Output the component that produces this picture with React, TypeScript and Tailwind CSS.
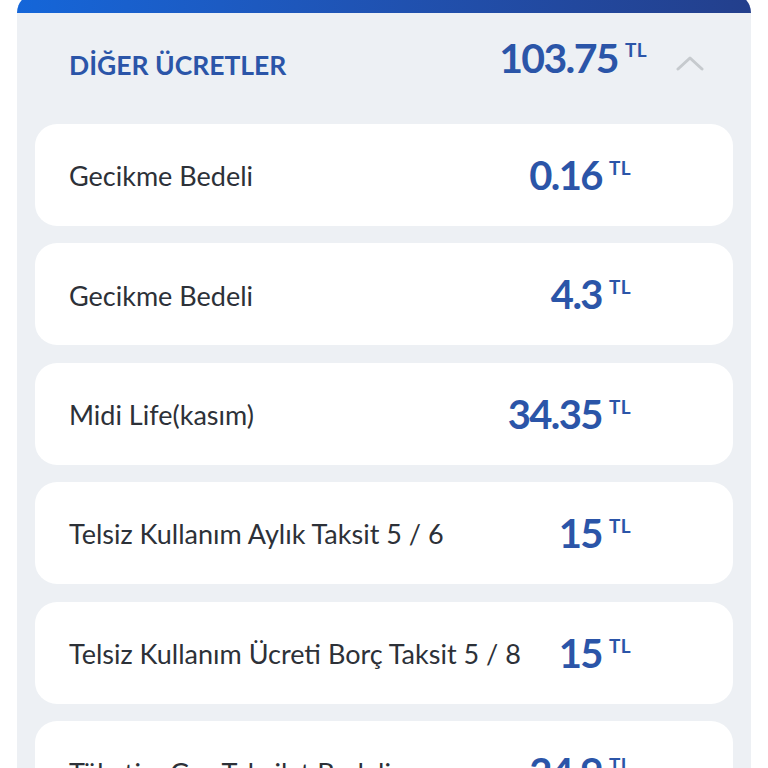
import React from 'react';

interface Fee {
  label: string;
  amount: string;
}

const fees: Fee[] = [
  { label: 'Gecikme Bedeli', amount: '0.16' },
  { label: 'Gecikme Bedeli', amount: '4.3' },
  { label: 'Midi Life(kasım)', amount: '34.35' },
  { label: 'Telsiz Kullanım Aylık Taksit 5 / 6', amount: '15' },
  { label: 'Telsiz Kullanım Ücreti Borç Taksit 5 / 8', amount: '15' },
  { label: 'Tüketim Gaz Tahsilat Bedeli', amount: '24.9' },
];

const Amount: React.FC<{ value: string; big?: boolean }> = ({ value, big }) => (
  <div className="flex items-start">
    <span
      className={`font-bold text-[#2b55a8] leading-none ${
        big ? 'text-[41px] tracking-[-0.04em]' : 'text-[40px] tracking-[-0.04em]'
      }`}
    >
      {value}
    </span>
    <span className="ml-[7px] mt-[3px] text-[19px] font-bold leading-none tracking-[0.02em] text-[#2b55a8]">
      TL
    </span>
  </div>
);

const FeeCard: React.FC<{ fee: Fee }> = ({ fee }) => (
  <div className="flex h-[102px] shrink-0 items-center justify-between rounded-[22px] bg-white pl-[34px] pr-[102px]">
    <span className="pt-[3px] text-[27px] text-[#2d3138]">{fee.label}</span>
    <Amount value={fee.amount} />
  </div>
);

export default function App() {
  return (
    <div
      className="h-[768px] overflow-hidden bg-white px-[17px]"
      style={{ fontFamily: 'Lato, "Noto Sans", sans-serif' }}
    >
      <div className="-mt-[7px] overflow-hidden rounded-t-[20px] bg-[#edf0f4]">
        <div className="h-[20px] bg-gradient-to-r from-[#1466d9] to-[#233f8c]" />

        {/* başlık */}
        <div className="flex h-[111px] items-center pl-[52px] pr-[47px]">
          <span className="mt-[-5px] flex-1 text-[26.5px] font-bold text-[#2b55a8]">
            DİĞER ÜCRETLER
          </span>
          <div className="mt-[-22px]">
            <Amount value="103.75" big />
          </div>
          <svg width="28" height="16" viewBox="0 0 28 16" className="ml-[29px] mt-[-12px]">
            <path
              d="M2 14 L14 3 L26 14"
              fill="none"
              stroke="#c6cace"
              strokeWidth="3"
              strokeLinecap="round"
              strokeLinejoin="round"
            />
          </svg>
        </div>

        <div className="flex flex-col gap-[17.4px] px-[18px] pb-[20px]">
          {fees.map((fee, i) => (
            <FeeCard key={i} fee={fee} />
          ))}
        </div>
      </div>
    </div>
  );
}
